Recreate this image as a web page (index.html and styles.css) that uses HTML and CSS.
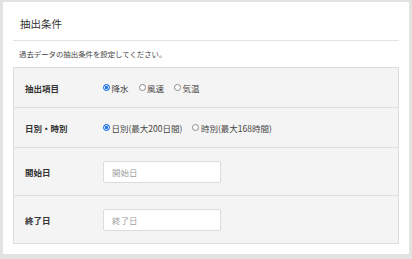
FILE: index.html
```html
<!DOCTYPE html>
<html lang="ja">
<head>
<meta charset="utf-8">
<link rel="stylesheet" href="styles.css">
</head>
<body>
<div class="card">
  <div class="card-head"><h2 class="title">抽出条件</h2></div>
  <p class="desc">過去データの抽出条件を設定してください。</p>
  <div class="table">
    <div class="row">
      <div class="label">抽出項目</div>
      <div class="value">
        <span class="opt"><span class="radio on"></span>降水</span>
        <span class="opt"><span class="radio"></span>風速</span>
        <span class="opt"><span class="radio"></span>気温</span>
      </div>
    </div>
    <div class="row">
      <div class="label">日別・時別</div>
      <div class="value">
        <span class="opt"><span class="radio on"></span>日別(最大200日間)</span>
        <span class="opt"><span class="radio"></span>時別(最大168時間)</span>
      </div>
    </div>
    <div class="row tall">
      <div class="label">開始日</div>
      <div class="value"><input class="field" type="text" placeholder="開始日"></div>
    </div>
    <div class="row tall">
      <div class="label">終了日</div>
      <div class="value"><input class="field" type="text" placeholder="終了日"></div>
    </div>
  </div>
</div>
</body>
</html>
```
FILE: styles.css
```css
* { box-sizing: border-box; }
html, body { margin: 0; padding: 0; }
body {
  background: #e3e3e3;
  padding: 2px 3px 5px 3px;
  font-family: "Noto Sans CJK JP", "Noto Sans", sans-serif;
  color: #333;
}
.card {
  width: 406px;
  height: 252px;
  background: #fff;
  padding: 0 10px 10px;
}
.card-head {
  padding: 15px 0 9px 7px;
  border-bottom: 1px solid #e2e2e2;
}
.title {
  margin: 0;
  font-size: 10.5px;
  line-height: 14px;
  font-weight: normal;
  color: #333;
}
.desc {
  margin: 0;
  padding: 7px 0 7px 6px;
  font-size: 7.4px;
  line-height: 12px;
  color: #444;
}
.table {
  border: 1px solid #dcdcdc;
  background: #f4f4f4;
}
.row {
  display: flex;
  align-items: center;
  height: 40px;
  border-bottom: 1px solid #e0e0e0;
}
.row:last-child { border-bottom: none; height: 47px; }
.row.tall { height: 48px; }
.row.tall:last-child { height: 47px; }
.label {
  width: 89px;
  padding-left: 11px;
  font-size: 8.5px;
  font-weight: bold;
  color: #333;
}
.value {
  display: flex;
  align-items: center;
  gap: 10px;
  font-size: 8.5px;
  color: #444;
}
.opt {
  display: flex;
  align-items: center;
  gap: 1.5px;
}
.radio {
  display: inline-block;
  width: 7px;
  height: 7px;
  border-radius: 50%;
  border: 1px solid #8a8a8a;
  background: #fff;
}
.radio.on {
  border: 1px solid #1a73e8;
  background: #1a73e8;
  box-shadow: inset 0 0 0 0.8px #fff;
}
.field {
  width: 118px;
  height: 22px;
  border: 1px solid #dcdcdc;
  border-radius: 2px;
  background: #fff;
  padding: 0 0 0 8px;
  font-family: "Noto Sans CJK JP", "Noto Sans", sans-serif;
  font-size: 8.5px;
  color: #333;
  outline: none;
}
.field::placeholder { color: #a0a0a0; }
```
